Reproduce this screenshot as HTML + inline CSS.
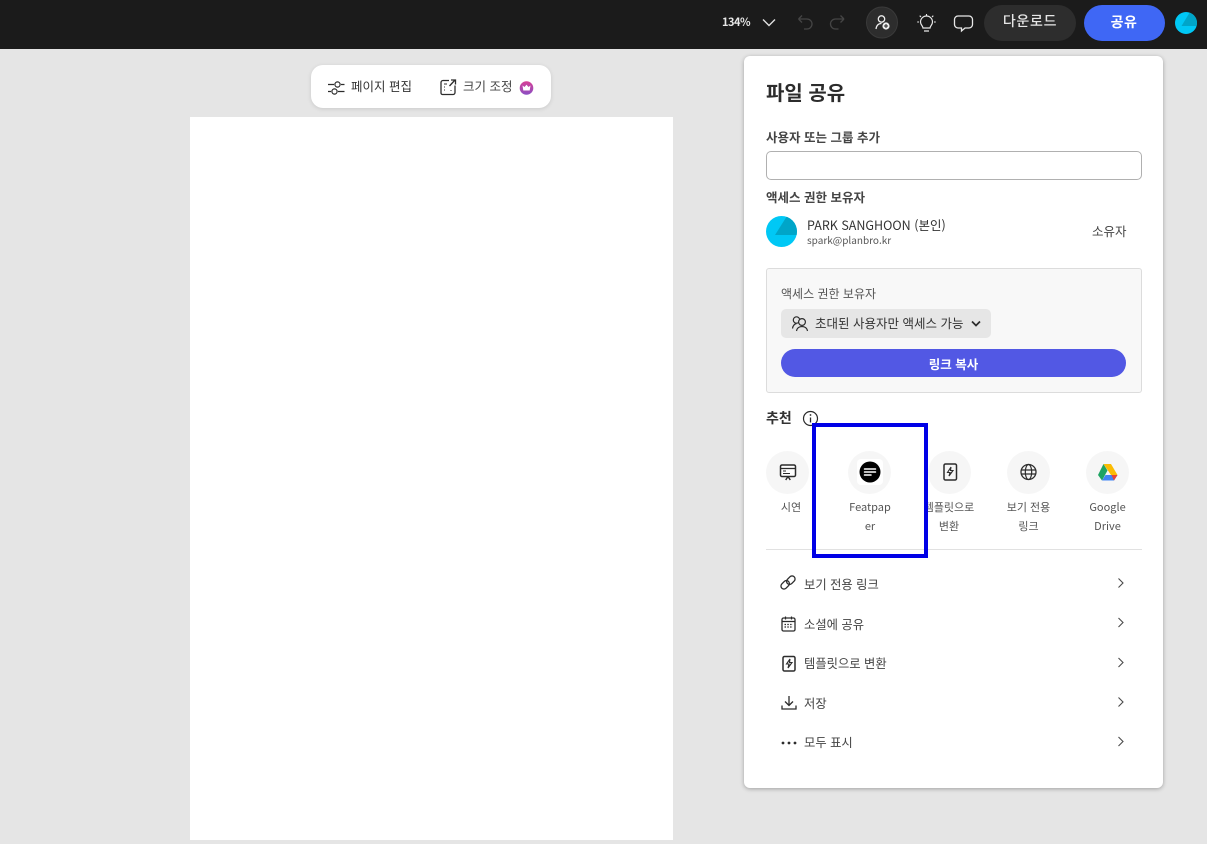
<!DOCTYPE html>
<html lang="ko"><head><meta charset="utf-8"><style>
*{box-sizing:border-box}
html,body{margin:0;padding:0;width:1207px;height:844px;overflow:hidden;background:#e5e5e5;font-family:"Noto Sans CJK KR","Liberation Sans",sans-serif;color:#2c2c2c}
.a{position:absolute}
.t{position:absolute;white-space:nowrap;line-height:20px;height:20px}
.c{text-align:center;transform:translateX(-50%)}
svg{position:absolute;overflow:visible;fill:none}
.circ{position:absolute;width:43px;height:43px;border-radius:50%;background:#f6f6f6;top:450.5px}
.arr{stroke:#4b4b4b;stroke-width:1.1}
</style></head><body>
<div class="a" style="left:0;top:0;width:1207px;height:49px;background:#1b1b1b"></div>
<div class="t" style="left:722px;top:12px;font-size:11px;font-weight:700;color:#e8e8e8;letter-spacing:-.5px">134%</div>
<svg style="left:0;top:0" width="1207" height="49">
<path d="M763 19.500l6 6 6-6" stroke="#e0e0e0" stroke-width="1.400"/>
<path d="M798.500 19h8.500a5 5 0 0 1 5 5v0a5 5 0 0 1-5 5h-3M798.500 19l3.500-3.500M798.500 19l3.500 3.500" stroke="#454545" stroke-width="1.300"/>
<path d="M844 19h-8.500a5 5 0 0 0-5 5v0a5 5 0 0 0 5 5h3M844 19l-3.500-3.500M844 19l-3.500 3.500" stroke="#454545" stroke-width="1.300"/>
<circle cx="882" cy="22.500" r="15.500" fill="#2d2d2d" stroke="#3a3a3a"/>
<circle cx="881.500" cy="19" r="3.200" stroke="#eee" stroke-width="1.300"/>
<path d="M876 29c.5-3.500 2.500-5.500 5.500-5.500" stroke="#eee" stroke-width="1.300"/>
<circle cx="886" cy="26" r="3.600" fill="#eee"/><path d="M884 26h4M886 24v4" stroke="#222" stroke-width="1"/>
<path d="M923 28c0-2-2.500-3-2.500-6a6 6 0 0 1 12 0c0 3-2.500 4-2.500 6zM924 31h5" stroke="#e8e8e8" stroke-width="1.200"/>
<path d="M926.500 14v1.500M919 22h-1.800M935.800 22H934M921 17l-1.300-1.300M932 17l1.300-1.300" stroke="#e8e8e8" stroke-width="1.100"/>
<path d="M958 16h11a3.500 3.500 0 0 1 3.500 3.500v5a3.500 3.500 0 0 1-3.500 3.500h-4l-3.500 3v-3H958a3.500 3.500 0 0 1-3.500-3.500v-5A3.500 3.500 0 0 1 958 16z" stroke="#e8e8e8" stroke-width="1.300"/>
<defs><clipPath id="av1"><circle cx="1186" cy="23" r="11"/></clipPath></defs>
<g clip-path="url(#av1)"><rect x="1175" y="12" width="22" height="22" fill="#00c8f5"/><path d="M1181.500 26L1190 12h7v14z" fill="#00a5c8"/></g>
</svg>
<div class="a" style="left:984px;top:5px;width:92px;height:36px;border-radius:18px;background:#2d2d2d"></div>
<div class="t c" style="left:1030px;top:11px;font-size:14px;font-weight:500;color:#e6e6e6;letter-spacing:.7px">다운로드</div>
<div class="a" style="left:1084px;top:5px;width:81px;height:36px;border-radius:18px;background:#3f67f5"></div>
<div class="t c" style="left:1124px;top:12px;font-size:14px;font-weight:700;color:#fff;letter-spacing:.5px">공유</div>

<div class="a" style="left:311px;top:65px;width:240px;height:43px;border-radius:12px;background:#fff;box-shadow:0 1px 4px rgba(0,0,0,.12)"></div>
<svg style="left:0;top:0" width="600" height="120">
<path d="M328 84.500h6M341 84.500h3.500M328 91.500h3M338 91.500h6.500" stroke="#2c2c2c" stroke-width="1.200"/>
<circle cx="337.500" cy="84.500" r="2.600" stroke="#2c2c2c" stroke-width="1.200"/><circle cx="334.500" cy="91.500" r="2.600" stroke="#2c2c2c" stroke-width="1.200"/>
<path d="M449 80.500h-6a2 2 0 0 0-2 2v10.500a1.500 1.500 0 0 0 1.500 1.500h10.500a2 2 0 0 0 2-2v-7" stroke="#2c2c2c" stroke-width="1.300"/>
<path d="M449.500 86l5.500-6M451 80h4.500v4.500" stroke="#2c2c2c" stroke-width="1.300"/>
<path d="M444 84h3M444 87h1M444 90h1M451 90v1" stroke="#2c2c2c" stroke-width="1"/>
<defs><linearGradient id="g" x1="0" y1="0" x2="0" y2="1"><stop offset="0" stop-color="#d83f95"/><stop offset="1" stop-color="#8a4fc4"/></linearGradient></defs>
<circle cx="526.500" cy="88" r="6.800" fill="url(#g)"/><path d="M522.500 85.500l2 1.500 2-2.300 2 2.300 2-1.500-.8 5h-6.400z" fill="#fff"/>
</svg>
<div class="t" style="left:351px;top:76px;font-size:12.500px;color:#333">페이지 편집</div>
<div class="t" style="left:463px;top:76px;font-size:12.500px;color:#444">크기 조정</div>

<div class="a" style="left:190px;top:117px;width:483px;height:723px;background:#fff"></div>

<div class="a" style="left:744px;top:56px;width:419px;height:732px;background:#fff;border-radius:6px;box-shadow:0 1px 4px rgba(0,0,0,.3)"></div>
<div class="t" style="left:766px;top:82px;font-size:20px;font-weight:700;color:#2c2c2c">파일 공유</div>
<div class="t" style="left:766px;top:127px;font-size:12.500px;font-weight:700;color:#444">사용자 또는 그룹 추가</div>
<div class="a" style="left:766px;top:151px;width:376px;height:29px;border:1px solid #b0b0b0;border-radius:5px"></div>
<div class="t" style="left:766px;top:187px;font-size:12.500px;font-weight:700;color:#444">액세스 권한 보유자</div>
<div class="t" style="left:807px;top:215px;font-size:12.500px;color:#333">PARK SANGHOON (본인)</div>
<div class="t" style="left:807px;top:230px;font-size:10px;color:#555">spark@planbro.kr</div>
<div class="t" style="left:1092px;top:221px;font-size:12.500px;color:#444">소유자</div>

<div class="a" style="left:766px;top:268px;width:376px;height:125px;background:#f8f8f8;border:1px solid #dcdcdc;border-radius:3px"></div>
<div class="t" style="left:781px;top:284px;font-size:12px;color:#555">액세스 권한 보유자</div>
<div class="a" style="left:781px;top:309px;width:210px;height:29px;background:#e6e6e6;border-radius:5px"></div>
<svg style="left:0;top:0" width="1207" height="844">
<defs><clipPath id="av2"><circle cx="781.500" cy="231.500" r="15.500"/></clipPath></defs>
<g clip-path="url(#av2)"><rect x="766" y="216" width="31" height="31" fill="#00c8f5"/><path d="M775 235L787 216h10v19z" fill="#00a5c8"/></g>
<circle cx="796.500" cy="320" r="3.200" stroke="#2c2c2c" stroke-width="1.200"/><path d="M792.500 328.500c.4-2.500 1.800-4.500 4-5" stroke="#2c2c2c" stroke-width="1.200"/>
<circle cx="802" cy="322" r="3.400" fill="#e6e6e6" stroke="#2c2c2c" stroke-width="1.200"/><path d="M796.500 331c.5-3 2.800-4.500 5.500-4.500s5 1.500 5.500 4.500" stroke="#2c2c2c" stroke-width="1.200"/>
<path d="M972 321.500l4 4 4-4" stroke="#2c2c2c" stroke-width="1.700"/>
<circle cx="810.500" cy="418.500" r="7" stroke="#2c2c2c" stroke-width="1.200"/><path d="M810.500 417.500v5" stroke="#2c2c2c" stroke-width="1.300"/><circle cx="810.500" cy="415" r=".9" fill="#2c2c2c"/>
</svg>
<div class="t" style="left:815px;top:313px;font-size:12.500px;color:#333">초대된 사용자만 액세스 가능</div>
<div class="a" style="left:781px;top:349px;width:345px;height:28px;border-radius:14px;background:#5258e4"></div>
<div class="t c" style="left:953.500px;top:354px;font-size:12.500px;font-weight:700;color:#fff">링크 복사</div>
<div class="t" style="left:766px;top:408px;font-size:14px;font-weight:700;color:#333">추천</div>

<div class="circ" style="left:766px"></div>
<div class="circ" style="left:848px"></div>
<div class="circ" style="left:928px"></div>
<div class="circ" style="left:1007px"></div>
<div class="circ" style="left:1086px"></div>
<div class="a" style="left:857px;top:459px;width:26px;height:26px;background:#fff;border-radius:4px"></div>
<svg style="left:0;top:0" width="1207" height="844">
<rect x="780.500" y="465" width="15" height="11.500" rx="1.500" fill="#fff" stroke="#2c2c2c" stroke-width="1.500"/><path d="M780.500 468.500h15" stroke="#2c2c2c" stroke-width="1.300"/><path d="M783 471h3M783 473.500h7" stroke="#2c2c2c" stroke-width="1"/><path d="M788 476.500l-2.300 3.500M788 476.500l2.300 3.500" stroke="#2c2c2c" stroke-width="1.400"/>
<circle cx="870" cy="472" r="10.500" fill="#000"/><path d="M864.500 469h11M864.500 472h11M864.500 475h6.500" stroke="#fff" stroke-width="1.500" stroke-linecap="round"/>
<rect x="944" y="464" width="12.500" height="16" rx="1.500" stroke="#2c2c2c" stroke-width="1.500"/><path d="M951 467l-3.500 5.500h2.500l-1 3.500 4-5.500h-2.500z" stroke="#2c2c2c" stroke-width="1.100"/>
<circle cx="1028.500" cy="472" r="7.500" stroke="#2c2c2c" stroke-width="1.300"/><ellipse cx="1028.500" cy="472" rx="3.200" ry="7.500" stroke="#2c2c2c" stroke-width="1.200"/><path d="M1021 470h15M1021 474h15" stroke="#2c2c2c" stroke-width="1.200"/>
<path d="M1103.500 464l4 6.500-5.500 10-4-5.500z" fill="#1fa463"/><path d="M1103.500 464h7.500l6.500 11h-6.500z" fill="#fbbc04"/><path d="M1102 480.500l3.500-5.500h12l-3.500 5.500z" fill="#4285f4"/><path d="M1117.500 475l-3.500 5.500-2.500-5.500z" fill="#ea4335"/>

<g stroke="#2c2c2c" stroke-width="1.300"><rect x="780.500" y="582" width="9.500" height="6" rx="3" transform="rotate(-45 785 585)"/><rect x="786" y="577" width="9.500" height="6" rx="3" transform="rotate(-45 791 580)"/></g>
<rect x="782" y="618" width="13" height="13" rx="1.500" stroke="#2c2c2c" stroke-width="1.300"/><path d="M782 621.500h13M785.500 616.500v3M791.500 616.500v3" stroke="#2c2c2c" stroke-width="1.200"/><path d="M784.500 624.500h8.500M784.500 627h8.500" stroke="#2c2c2c" stroke-width="1.300" stroke-dasharray="1.500 1.300"/>
<rect x="783" y="656.500" width="12" height="14.500" rx="1.500" stroke="#2c2c2c" stroke-width="1.500"/><path d="M790 659l-3.500 5h2.500l-1 4 4-5.500h-2.500z" stroke="#2c2c2c" stroke-width="1.100"/>
<path d="M789 696v9M785 701.500l4 4 4-4M782 705.500v3.500h14v-3.500" stroke="#2c2c2c" stroke-width="1.300"/>
<circle cx="783" cy="743" r="1.400" fill="#2c2c2c"/><circle cx="789" cy="743" r="1.400" fill="#2c2c2c"/><circle cx="795" cy="743" r="1.400" fill="#2c2c2c"/>
<path class="arr" d="M1118.500 578.500l4.500 4.500-4.500 4.500"/><path class="arr" d="M1118.500 618l4.500 4.500-4.500 4.500"/><path class="arr" d="M1118.500 658l4.500 4.500-4.500 4.500"/><path class="arr" d="M1118.500 697.500l4.500 4.500-4.500 4.500"/><path class="arr" d="M1118.500 737l4.500 4.500-4.500 4.500"/>
</svg>
<div class="t c" style="left:791px;top:497px;font-size:11px;color:#555">시연</div>
<div class="t c" style="left:870px;top:497px;font-size:11px;color:#555">Featpap</div>
<div class="t c" style="left:870px;top:516px;font-size:11px;color:#555">er</div>
<div class="t c" style="left:949px;top:497px;font-size:11px;color:#555">템플릿으로</div>
<div class="t c" style="left:949px;top:516px;font-size:11px;color:#555">변환</div>
<div class="t c" style="left:1028.500px;top:497px;font-size:11px;color:#555">보기 전용</div>
<div class="t c" style="left:1028.500px;top:516px;font-size:11px;color:#555">링크</div>
<div class="t c" style="left:1107.500px;top:497px;font-size:11px;color:#555">Google</div>
<div class="t c" style="left:1107.500px;top:516px;font-size:11px;color:#555">Drive</div>
<div class="a" style="left:766px;top:549px;width:376px;height:1px;background:#e1e1e1"></div>

<div class="t" style="left:804px;top:574px;font-size:12.300px;color:#444">보기 전용 링크</div>
<div class="t" style="left:804px;top:614px;font-size:12.300px;color:#444">소셜에 공유</div>
<div class="t" style="left:804px;top:653px;font-size:12.300px;color:#444">템플릿으로 변환</div>
<div class="t" style="left:804px;top:693px;font-size:12.300px;color:#444">저장</div>
<div class="t" style="left:804px;top:732px;font-size:12.300px;color:#444">모두 표시</div>

<div class="a" style="left:812px;top:423px;width:116px;height:135px;border:4px solid #0000e6"></div>
</body></html>
